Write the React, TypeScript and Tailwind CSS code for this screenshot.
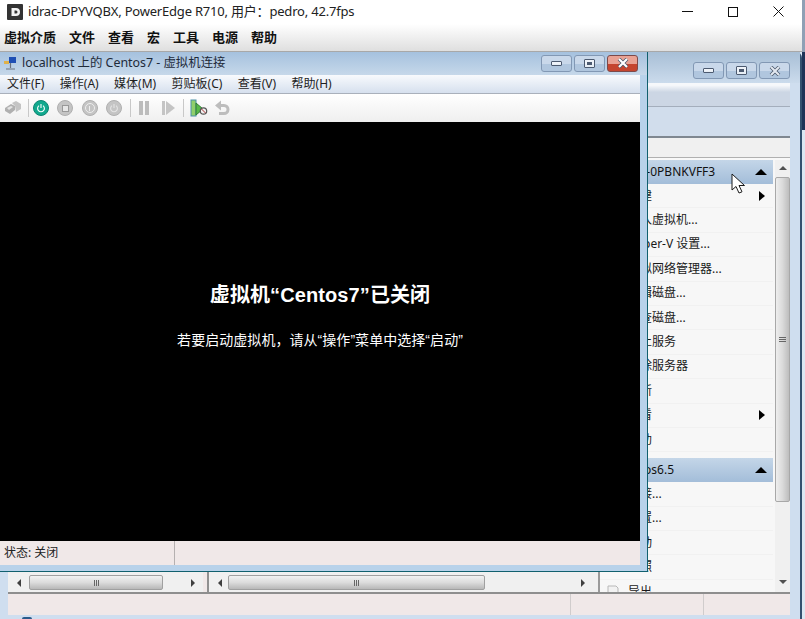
import React from "react";

const font = "font-['Noto_Sans','Noto_Sans_CJK_SC',sans-serif]";

function WinButton({ kind, dim }: { kind: "min" | "max" | "close"; dim?: boolean }) {
  const bg =
    kind === "close" && !dim
      ? "bg-linear-to-b from-[#e9a294] from-50% to-[#c5452f] to-50% border-[#7d4a4a]"
      : "bg-linear-to-b from-[#c9d8ea] from-50% to-[#b0c6de] to-50% border-[#8298b4]";
  return (
    <div className={`w-[31px] h-[17px] rounded-[3px] border flex items-center justify-center ${bg}`}>
      {kind === "min" && <div className="w-[11px] h-[5px] bg-white/70 border border-[#4c5a70] rounded-[1px]" />}
      {kind === "max" && (
        <div className="w-[11px] h-[9px] bg-white/70 border border-[#4c5a70] rounded-[1px] flex items-center justify-center">
          <div className="w-[5px] h-[3px] bg-[#4c5a70]" />
        </div>
      )}
      {kind === "close" && (
        <svg width="12" height="10" viewBox="0 0 12 10">
          <path d="M2 1 L10 9 M10 1 L2 9" stroke="#475569" strokeWidth="3.6" />
          <path d="M2 1 L10 9 M10 1 L2 9" stroke={dim ? "#e2e8f0" : "#ffffff"} strokeWidth="2.2" />
        </svg>
      )}
    </div>
  );
}

function ScrollBarH({ width, thumbLeft, thumbWidth, arrowRight }: { width: number; thumbLeft: number; thumbWidth: number; arrowRight: number }) {
  return (
    <div className="relative h-[20px] bg-[#f0f0f0]" style={{ width }}>
      <div className="absolute left-[9px] top-[7px] w-0 h-0 border-y-[4px] border-y-transparent border-r-[4px] border-r-[#404040]" />
      <div
        className="absolute top-[3px] h-[15px] rounded-[2px] border border-[#a0a0a0] bg-linear-to-b from-[#f2f2f2] via-[#dcdcdc] to-[#b8b8b8] flex items-center justify-center"
        style={{ left: thumbLeft, width: thumbWidth }}
      >
        <div className="flex gap-[1px]">
          <div className="w-[1px] h-[6px] bg-[#666]" />
          <div className="w-[1px] h-[6px] bg-[#666]" />
          <div className="w-[1px] h-[6px] bg-[#666]" />
        </div>
      </div>
      <div
        className="absolute top-[7px] w-0 h-0 border-y-[4px] border-y-transparent border-l-[4px] border-l-[#404040]"
        style={{ right: arrowRight }}
      />
    </div>
  );
}

function RowIcon({ kind }: { kind: "snap" | "doc" }) {
  if (kind === "snap") {
    return (
      <svg className="absolute left-[5px] top-[4px]" width="16" height="16" viewBox="0 0 16 16">
        <path d="M1 5 H8 M1 8 H8 M1 11 H8" stroke="#3f8fb0" strokeWidth="1.4" />
        <circle cx="11" cy="8" r="3.6" fill="#f7f7f7" stroke="#8a5a5a" strokeWidth="1.2" />
      </svg>
    );
  }
  return (
    <svg className="absolute left-[5px] top-[4px]" width="16" height="16" viewBox="0 0 16 16" fill="none">
      <path d="M3 2 H11 L13 4 V14 H3 Z" fill="#f2f2f2" stroke="#b8b8b8" />
    </svg>
  );
}

function ActionRow({ label, arrow, icon }: { label: string; arrow?: boolean; icon?: "snap" | "doc" }) {
  return (
    <div className="relative h-[24.4px] flex items-center pl-[28px] pr-[8px] border-b border-[#f1f1f1] text-[12px] text-[#1a1a1a] whitespace-nowrap">
      {icon && <RowIcon kind={icon} />}
      <span className="flex-1">{label}</span>
      {arrow && <div className="w-0 h-0 border-y-[5px] border-y-transparent border-l-[6px] border-l-black" />}
    </div>
  );
}

function ActionHeading({ label, short }: { label: string; short?: boolean }) {
  return (
    <div className={`h-[24px] flex items-center pr-[6px] bg-linear-to-b from-[#c4d6e8] to-[#a3bdd9] text-[12px] text-[#111] whitespace-nowrap ${short ? "pl-[18px]" : "pl-[22px]"}`}>
      <span className="flex-1">{label}</span>
      <div className="w-0 h-0 border-x-[6px] border-x-transparent border-b-[6px] border-b-black" />
    </div>
  );
}

function BackWindow() {
  return (
    <div className="absolute left-0 top-0 w-[802px] h-[567px] bg-[#cfdeef] rounded-tr-[6px] border-r-2 border-[#33506e] flex flex-col pl-[8px] pr-[10px]">
      <div className="h-[31px] -ml-[8px] -mr-[10px] bg-linear-to-b from-[#a8bfd6] to-[#cbdbec] flex items-center justify-end gap-[2px] pr-[10px] pt-[6px] shrink-0">
        <WinButton kind="min" dim />
        <WinButton kind="max" dim />
        <WinButton kind="close" dim />
      </div>
      <div className="h-[24px] bg-linear-to-b from-[#f6f8fb] from-10% to-[#ccd6e4] to-40% border-b border-[#a4aebc] shrink-0" />
      <div className="h-[31px] bg-[#d1ddec] border-b-2 border-[#7f8790] shrink-0" />
      <div className="h-[20px] bg-[#f0f0f0] border-b border-[#b0b0b0] shrink-0" />
      <div className="h-[2px] bg-[#f8f8f8] shrink-0" />
      <div className="flex-1 flex min-h-0">
        <div className="w-[590px] flex flex-col justify-end bg-white shrink-0">
          <div className="flex bg-[#f0e8e8] justify-between">
            <ScrollBarH width={195} thumbLeft={21} thumbWidth={134} arrowRight={8} />
            <div className="border-l-2 border-[#909090]">
              <ScrollBarH width={389} thumbLeft={19} thumbWidth={257} arrowRight={13} />
            </div>
          </div>
        </div>
        <div className="flex-1 flex border-l-2 border-[#9a9a9a] bg-[#f7f7f7] overflow-hidden">
          <div className="w-[173px] shrink-0 overflow-hidden">
            <ActionHeading label="WIN-0PBNKVFF3" />
            {[
              ["新建", true],
              ["导入虚拟机...", false],
              ["Hyper-V 设置...", false],
              ["虚拟网络管理器...", false],
              ["编辑磁盘...", false],
              ["检查磁盘...", false],
              ["停止服务", false],
              ["删除服务器", false],
              ["刷新", false],
              ["查看", true],
              ["帮助", false],
            ].map(([label, arrow]) => (
              <ActionRow key={label as string} label={label as string} arrow={arrow as boolean} />
            ))}
            <div className="h-[6px]" />
            <ActionHeading label="Centos6.5" short />
            <ActionRow label="连接..." />
            <ActionRow label="设置..." />
            <ActionRow label="启动" />
            <ActionRow label="快照" icon="snap" />
            <ActionRow label="导出" icon="doc" />
          </div>
          <div className="w-[15px] ml-[2px] relative bg-[#f0f0f0] shrink-0 flex flex-col items-center">
            <div className="mt-[6px] w-0 h-0 border-x-[4px] border-x-transparent border-b-[4px] border-b-[#505050]" />
            <div className="mt-[7px] w-full h-[325px] rounded-[2px] border border-[#a8a8a8] bg-linear-to-r from-[#eeeeee] via-[#dadada] to-[#bdbdbd] flex flex-col items-center justify-center gap-[1px]">
              <div className="w-[7px] h-[1px] bg-[#666]" />
              <div className="w-[7px] h-[1px] bg-[#666]" />
              <div className="w-[7px] h-[1px] bg-[#666]" />
            </div>
            <div className="mt-auto mb-[8px] w-0 h-0 border-x-[4px] border-x-transparent border-t-[4px] border-t-[#505050]" />
          </div>
        </div>
      </div>
      <div className="h-[23px] border-t-2 border-[#8e8e8e] bg-[#f0e8e8] flex shrink-0">
        <div className="w-[563px] border-r border-[#d0cccc]" />
        <div className="w-[133px] border-r border-[#d0cccc]" />
      </div>
      <div className="h-[4px] shrink-0" />
    </div>
  );
}

function ToolCircle({ active, children }: { active?: boolean; children: React.ReactNode }) {
  return (
    <div
      className={`w-[16px] h-[16px] rounded-full flex items-center justify-center border ${
        active ? "bg-[#12a98e] border-[#0c8672]" : "bg-[#c4c4c4] border-[#b0b0b0]"
      }`}
    >
      {children}
    </div>
  );
}

function PowerGlyph({ color }: { color: string }) {
  return (
    <svg width="10" height="10" viewBox="0 0 10 10" fill="none">
      <path d="M3 2.6 A3.4 3.4 0 1 0 7 2.6" stroke={color} strokeWidth="1.1" />
      <path d="M5 1 V5" stroke={color} strokeWidth="1.1" />
    </svg>
  );
}

function Toolbar() {
  return (
    <div className="h-[28px] bg-linear-to-b from-[#ffffff] to-[#efefef] flex items-center pl-[4px] shrink-0">
      <svg width="18" height="16" viewBox="0 0 18 16">
        <path d="M1 8 L7 4 L11 6 L11 10 L6 14 L1 11 Z" fill="#b0b0b0" />
        <path d="M8 3 L12 1 L17 4 L17 9 L12 12 L11 6 Z" fill="#c4c4c4" />
        <path d="M3 8 L7 6 L9 7 L5 10 Z" fill="#e4e4e4" />
      </svg>
      <div className="w-[1px] h-[18px] bg-[#c8c8c8] ml-[6px] mr-[4px]" />
      <div className="flex gap-[8.33px]">
        <ToolCircle active><PowerGlyph color="#ffffff" /></ToolCircle>
        <ToolCircle><div className="w-[7px] h-[7px] bg-[#e6e6e6] border border-[#999]" /></ToolCircle>
        <ToolCircle>
          <div className="w-[10px] h-[10px] rounded-full border border-[#eee] flex items-center justify-center">
            <div className="w-[1px] h-[5px] bg-[#eee]" />
          </div>
        </ToolCircle>
        <ToolCircle><PowerGlyph color="#e4e4e4" /></ToolCircle>
      </div>
      <div className="w-[1px] h-[18px] bg-[#c8c8c8] ml-[8px] mr-[8px]" />
      <div className="flex gap-[2px]">
        <div className="w-[4px] h-[14px] bg-[#bcbcbc]" />
        <div className="w-[4px] h-[14px] bg-[#bcbcbc]" />
      </div>
      <div className="w-[3px] h-[14px] bg-[#c4c4c4] ml-[13px]" />
      <div className="w-0 h-0 ml-[1px] border-y-[7px] border-y-transparent border-l-[9px] border-l-[#c4c4c4]" />
      <div className="w-[1px] h-[18px] bg-[#c8c8c8] ml-[8px] mr-[6px]" />
      <svg width="18" height="18" viewBox="0 0 18 18">
        <rect x="1" y="1" width="5" height="16" fill="#8fcf6a" stroke="#4a8fa8" strokeWidth="1" />
        <path d="M6 4 L13 10 L6 16 Z" fill="#56b948" stroke="#2f7d32" strokeWidth="1" />
        <circle cx="13.5" cy="12" r="3.2" fill="#f1f1f1" stroke="#555" strokeWidth="1.2" />
        <path d="M11.5 10 L15.5 14" stroke="#a33" strokeWidth="1" />
      </svg>
      <svg className="ml-[6px]" width="16" height="16" viewBox="0 0 16 16" fill="none">
        <path d="M7 0.5 L1 5.5 L7 10.5 Z" fill="#bdbdbd" />
        <path d="M6 5.5 H10 A4 4 0 0 1 10 13.5 H5" stroke="#bdbdbd" strokeWidth="3" />
      </svg>
    </div>
  );
}

function FrontWindow() {
  return (
    <div className="absolute left-0 top-0 w-[648px] h-[520px] border-r border-b border-[#11606e] bg-[#b8d2ea] flex flex-col">
      <div className="h-[23px] bg-linear-to-b from-[#a5c1de] to-[#c6d8ea] flex items-center pl-[3px] pr-[9px] shrink-0">
        <svg width="15" height="15" viewBox="0 0 15 15">
          <rect x="6" y="1" width="7" height="6" fill="#1f4fb4" />
          <rect x="1" y="5" width="5" height="3" fill="#e0b24a" />
          <path d="M7.5 7 V12 M3 13 H12" stroke="#6b7280" strokeWidth="1.2" />
        </svg>
        <span className="ml-[4px] flex-1 text-[12.4px] leading-none text-[#1e2a3a] whitespace-nowrap">localhost 上的 Centos7 - 虚拟机连接</span>
        <div className="flex gap-[2px] -mt-[1px]">
          <WinButton kind="min" />
          <WinButton kind="max" />
          <WinButton kind="close" />
        </div>
      </div>
      <div className="w-[640px] flex-1 flex flex-col min-h-0">
        <div className="h-[18px] bg-linear-to-b from-[#f8fafd] to-[#d6e0ee] flex items-center gap-[15.4px] pl-[7px] text-[12px] text-[#1e1e1e] shrink-0">
          {["文件(F)", "操作(A)", "媒体(M)", "剪贴板(C)", "查看(V)", "帮助(H)"].map((m) => (
            <span key={m} className="whitespace-nowrap">{m}</span>
          ))}
        </div>
        <div className="h-[1px] bg-[#a9b0bb] shrink-0" />
        <Toolbar />
        <div className="flex-1 bg-black flex flex-col items-center pt-[161px] text-white min-h-0">
          <div className="text-[20px] font-bold leading-[24px] tracking-[0.1px] font-['Liberation_Sans','Noto_Sans_CJK_SC',sans-serif]">虚拟机“Centos7”已关闭</div>
          <div className="mt-[23px] text-[14px] leading-[20px] tracking-[0.05px] font-['Liberation_Sans','Noto_Sans_CJK_SC',sans-serif]">若要启动虚拟机，请从“操作”菜单中选择“启动”</div>
        </div>
        <div className="h-[24px] bg-[#f0e8e8] flex items-center text-[12px] text-[#222] shrink-0">
          <div className="w-[175px] h-full border-r border-[#b5b0b0] pl-[4px] flex items-center">状态: 关闭</div>
        </div>
        <div className="h-[6px] shrink-0" />
      </div>
    </div>
  );
}

function Cursor() {
  return (
    <svg className="absolute left-[731px] top-[173px]" width="16" height="22" viewBox="0 0 16 22">
      <path d="M1 1 V17 L5 13.5 L8 20 L11 18.8 L8 12.5 L13.5 12.5 Z" fill="#ffffff" stroke="#1a1a1a" strokeWidth="1" />
    </svg>
  );
}

export default function App() {
  return (
    <div className={`relative w-[805px] h-[619px] overflow-hidden flex flex-col bg-[#dbe7f2] ${font}`}>
      <div className="w-[802px] h-[24px] bg-white flex items-center pb-[1px] shrink-0">
        <svg className="ml-[7px]" width="16" height="16" viewBox="0 0 16 16">
          <rect width="16" height="16" rx="1" fill="#333" />
          <path fillRule="evenodd" d="M4.5 4 H9 A4 4 0 0 1 9 12 H4.5 Z M7.5 6.5 V9.5 H9 A1.5 1.5 0 0 0 9 6.5 Z" fill="#f2f2f2" />
        </svg>
        <span className="ml-[5px] flex-1 text-[13px] tracking-[-0.2px] text-[#222] whitespace-nowrap">idrac-DPYVQBX, PowerEdge R710, 用户：pedro, 42.7fps</span>
        <svg className="mr-[35px]" width="11" height="2" viewBox="0 0 11 2"><rect width="11" height="1" fill="#111" /></svg>
        <div className="w-[10px] h-[10px] border border-[#111] mr-[35px]" />
        <svg className="mr-[18px]" width="11" height="11" viewBox="0 0 11 11">
          <path d="M0.5 0.5 L10.5 10.5 M10.5 0.5 L0.5 10.5" stroke="#111" strokeWidth="1" />
        </svg>
      </div>
      <div className="w-[802px] h-[28px] bg-linear-to-b from-[#ffffff] to-[#dfdfdf] border-b border-[#a8a8a8] flex items-center gap-[13px] pl-[4px] text-[13px] font-bold text-[#111] shrink-0">
        {["虚拟介质", "文件", "查看", "宏", "工具", "电源", "帮助"].map((m) => (
          <span key={m}>{m}</span>
        ))}
      </div>
      <div className="relative flex-1">
        <BackWindow />
        <FrontWindow />
      </div>
      <div className="absolute left-[802px] top-0 w-[3px] h-[52px] bg-[#8fa0b5]" />
      <div className="absolute left-[802px] top-[52px] w-[3px] h-[78px] bg-[#1e3357]" />
      <div className="absolute left-[22px] top-[617px] w-[10px] h-[4px] rounded-full bg-[#2a5a8a]" />
      <Cursor />
    </div>
  );
}
